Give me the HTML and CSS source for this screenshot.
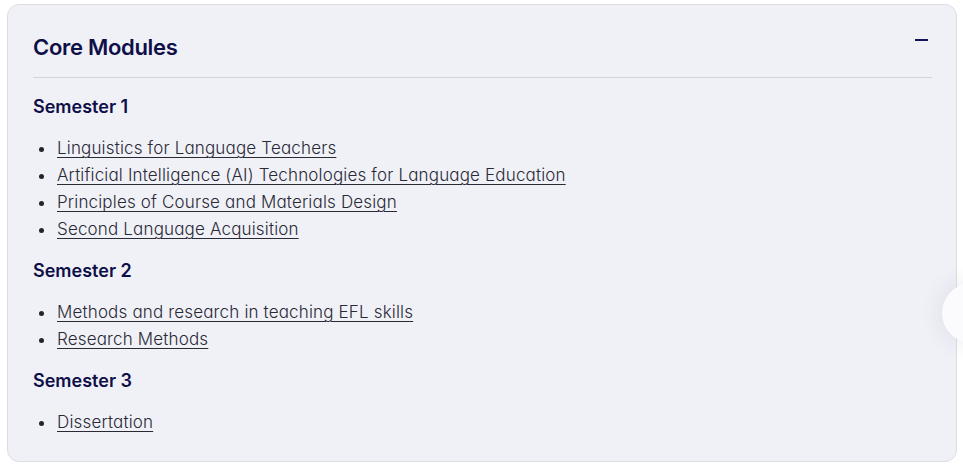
FILE: index.html
```html
<!DOCTYPE html>
<html lang="en">
<head>
<meta charset="utf-8">
<title>Core Modules</title>
<link rel="stylesheet" href="styles.css">
</head>
<body>
<section class="card">
  <header class="card-head">
    <h2 class="card-title">Core Modules</h2>
    <button class="toggle" aria-label="Collapse"><span class="minus"></span></button>
  </header>
  <div class="card-body">
    <h3 class="sem">Semester 1</h3>
    <ul class="mods">
      <li><a href="#">Linguistics for Language Teachers</a></li>
      <li><a href="#">Artificial Intelligence (AI) Technologies for Language Education</a></li>
      <li><a href="#">Principles of Course and Materials Design</a></li>
      <li><a href="#">Second Language Acquisition</a></li>
    </ul>
    <h3 class="sem">Semester 2</h3>
    <ul class="mods">
      <li><a href="#">Methods and research in teaching EFL skills</a></li>
      <li><a href="#">Research Methods</a></li>
    </ul>
    <h3 class="sem">Semester 3</h3>
    <ul class="mods">
      <li><a href="#">Dissertation</a></li>
    </ul>
  </div>
</section>
<div class="fab"></div>
</body>
</html>
```
FILE: styles.css
```css
* { box-sizing: border-box; }
html, body { margin: 0; padding: 0; background: #fff; }
body {
  font-family: "Inter", "Noto Sans", sans-serif;
  font-feature-settings: "cv11" 1;
  width: 963px;
  height: 472px;
  overflow: hidden;
  position: relative;
}
.card {
  margin: 4px 0 0 7px;
  width: 950px;
  background: #f0f1f7;
  border: 1px solid #dddee4;
  border-radius: 12px;
  padding: 27px 24px 25px 25px;
}
.card-head {
  display: flex;
  justify-content: space-between;
  align-items: flex-start;
  padding-bottom: 15px;
  border-bottom: 1px solid #d4d5dc;
}
.card-title {
  margin: 0;
  font-size: 22px;
  line-height: 30px;
  font-weight: 600;
  color: #0f0f48;
  letter-spacing: -0.3px;
}
.toggle {
  border: 0;
  background: none;
  padding: 0;
  margin: 7px 4px 0 0;
  width: 13px;
  height: 3px;
  display: flex;
}
.minus {
  display: block;
  width: 13px;
  height: 2px;
  background: #15155a;
}
.card-body {
  display: flex;
  flex-direction: column;
  gap: 16px;
  padding-top: 17px;
}
.sem {
  margin: 0;
  font-size: 18px;
  line-height: 24px;
  font-weight: 600;
  color: #0f0f48;
  letter-spacing: 0;
}
.mods {
  margin: 0;
  padding: 0 0 0 23px;
  list-style: disc;
  color: #23232f;
}
.mods li {
  font-size: 17px;
  line-height: 27px;
  font-weight: 350;
  letter-spacing: 0.16px;
  padding-left: 1px;
}
.mods a {
  color: #2a2a36;
  text-decoration: underline;
  text-underline-offset: 3px;
  text-decoration-thickness: 1px;
}
.fab {
  position: absolute;
  left: 942px;
  top: 283px;
  width: 60px;
  height: 60px;
  border-radius: 50%;
  background: #fbfbfd;
  box-shadow: 0 0 24px rgba(40, 40, 80, 0.10);
}
```
